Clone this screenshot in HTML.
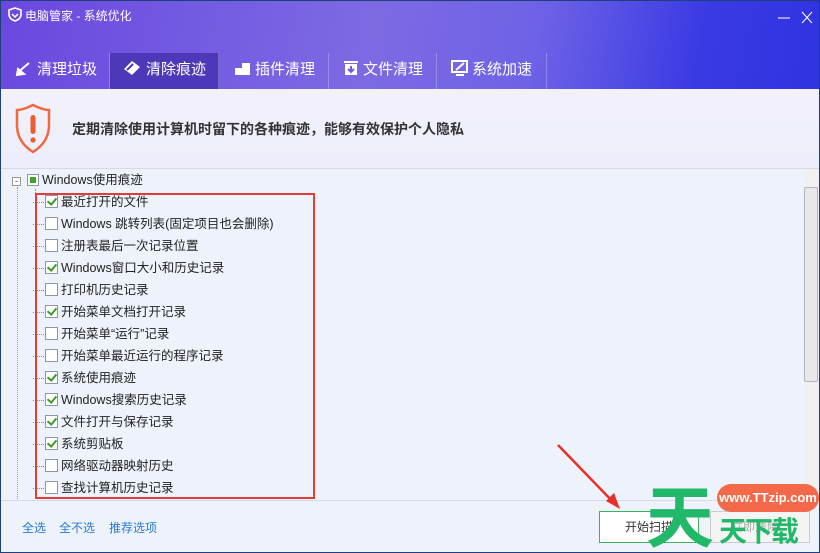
<!DOCTYPE html>
<html><head><meta charset="utf-8"><style>
*{margin:0;padding:0;box-sizing:border-box}
body{width:820px;height:553px;overflow:hidden;font-family:"Liberation Sans","Noto Sans CJK SC",sans-serif;background:#1d3f7a;position:relative}
.win{position:absolute;left:1px;top:1px;width:818px;height:551px;background:#eef3fb;overflow:hidden}
.hdr{position:absolute;left:0;top:0;width:818px;height:88px;background:linear-gradient(100deg,#6a48df 0%,#7d6ae3 45%,#6e62e6 65%,#3a3ae4 85%,#2f33e0 100%)}
.title{position:absolute;left:24px;top:6px;color:#fff;font-size:12px}
.tab{position:absolute;top:52px;height:36px;color:#fff;font-size:15px;line-height:34px;border-right:1px solid rgba(255,255,255,.25);white-space:nowrap}
.tab.act{background:#4d38b8}
.tab span{position:absolute;top:0}
.ban{position:absolute;left:0;top:88px;width:818px;height:80px;background:linear-gradient(180deg,#f3f1fb,#eceefb);border-bottom:1px solid #d5d9e6}
.ban span{position:absolute;left:71px;top:30px;font-size:14px;font-weight:bold;color:#333;white-space:nowrap}
.row{position:absolute;left:44px;height:22px;font-size:12.5px;color:#222;line-height:22px}
.cb{position:absolute;left:0;top:4px;width:13px;height:13px;border:1px solid #8b98a8;background:#fff}
.cb.c::after{content:"";position:absolute;left:3px;top:0px;width:4px;height:7px;border:solid #3a9a2a;border-width:0 2px 2px 0;transform:rotate(40deg)}
.row b{position:absolute;left:16px;font-weight:normal;white-space:nowrap}
.dot{position:absolute;left:-12px;top:11px;width:11px;border-top:1px dotted #888}
.links{position:absolute;top:518px;font-size:12px;color:#2a7ad6}
</style></head><body><div class="win">
<div class="hdr">
<svg style="position:absolute;left:7px;top:6px" width="14" height="15" viewBox="0 0 14 15"><path d="M7 1 L13 3 V7 C13 11 10 13 7 14 C4 13 1 11 1 7 V3 Z" fill="none" stroke="#fff" stroke-width="1.6"/><path d="M4 7 L7 10 L10 7" fill="none" stroke="#fff" stroke-width="1.5"/></svg>
<div class="title">电脑管家 - 系统优化</div>
<svg style="position:absolute;left:774px;top:10px" width="40" height="14"><path d="M3 7H15" stroke="#fff"/><path d="M27 1L37 12M37 1L27 12" stroke="#fff"/></svg>
<div class="tab" style="left:0;width:109px"><span style="left:36px">清理垃圾</span></div>
<div class="tab act" style="left:109px;width:109px"><span style="left:36px">清除痕迹</span></div>
<div class="tab" style="left:218px;width:110px"><span style="left:36px">插件清理</span></div>
<div class="tab" style="left:328px;width:108px"><span style="left:34px">文件清理</span></div>
<div class="tab" style="left:436px;width:110px"><span style="left:35px">系统加速</span></div>
<svg style="position:absolute;left:14px;top:60px" width="18" height="16"><path d="M2 12L14 2M3 8L9 13 2 14Z" stroke="#fff" stroke-width="2" fill="#fff"/></svg>
<svg style="position:absolute;left:121px;top:58px" width="20" height="18"><path d="M2 10L10 2 18 8 10 16Z" fill="#fff"/><path d="M5 11L11 5" stroke="#4d38b8" stroke-width="2"/></svg>
<svg style="position:absolute;left:233px;top:58px" width="18" height="18"><rect x="1" y="9" width="7" height="7" fill="#fff"/><rect x="8" y="4" width="8" height="12" fill="#fff"/></svg>
<svg style="position:absolute;left:342px;top:58px" width="16" height="18"><rect x="1" y="2" width="14" height="2" fill="#fff"/><rect x="2" y="5" width="12" height="11" fill="#fff"/><path d="M8 7V13M5 10L8 13 11 10" stroke="#6a5ee0" stroke-width="2" fill="none"/></svg>
<svg style="position:absolute;left:450px;top:58px" width="18" height="18"><rect x="1" y="2" width="15" height="11" fill="none" stroke="#fff" stroke-width="2"/><path d="M5 16H13" stroke="#fff" stroke-width="2"/><path d="M5 11L13 4" stroke="#fff" stroke-width="2"/></svg>
</div>
<div class="ban">
<svg style="position:absolute;left:14px;top:14px" width="36" height="52" viewBox="0 0 36 52"><path d="M18 2 C10 6 5 7 2 7 V22 C2 36 10 44 18 49 C26 44 34 36 34 22 V7 C31 7 26 6 18 2Z" fill="none" stroke="#ef6a3e" stroke-width="2.5"/><rect x="15.5" y="12" width="5" height="19" rx="2.5" fill="#ef5a2e"/><circle cx="18" cy="37" r="2.6" fill="#ef5a2e"/></svg>
<span>定期清除使用计算机时留下的各种痕迹，能够有效保护个人隐私</span>
</div>
<div style="position:absolute;left:11px;top:176px;width:9px;height:9px;border:1px solid #999;background:#fff;font-size:9px;line-height:6px;text-align:center;color:#333">-</div>
<div style="position:absolute;left:26px;top:173px;width:12px;height:12px;border:1px solid #8b98a8;background:#fff"><div style="margin:2px;width:6px;height:6px;background:#3fa52a"></div></div>
<div style="position:absolute;left:41px;top:170px;font-size:12.5px;color:#222;line-height:18px">Windows使用痕迹</div>
<div style="position:absolute;left:16px;top:186px;height:314px;border-left:1px dotted #999"></div>
<div style="position:absolute;left:34px;top:188px;height:12px;border-left:1px dotted #999"></div>
<div class="row" style="top:190px"><i class="dot"></i><i class="cb c"></i><b>最近打开的文件</b></div>
<div class="row" style="top:212px"><i class="dot"></i><i class="cb"></i><b>Windows 跳转列表(固定项目也会删除)</b></div>
<div class="row" style="top:234px"><i class="dot"></i><i class="cb"></i><b>注册表最后一次记录位置</b></div>
<div class="row" style="top:256px"><i class="dot"></i><i class="cb c"></i><b>Windows窗口大小和历史记录</b></div>
<div class="row" style="top:278px"><i class="dot"></i><i class="cb"></i><b>打印机历史记录</b></div>
<div class="row" style="top:300px"><i class="dot"></i><i class="cb c"></i><b>开始菜单文档打开记录</b></div>
<div class="row" style="top:322px"><i class="dot"></i><i class="cb"></i><b>开始菜单“运行”记录</b></div>
<div class="row" style="top:344px"><i class="dot"></i><i class="cb"></i><b>开始菜单最近运行的程序记录</b></div>
<div class="row" style="top:366px"><i class="dot"></i><i class="cb c"></i><b>系统使用痕迹</b></div>
<div class="row" style="top:388px"><i class="dot"></i><i class="cb c"></i><b>Windows搜索历史记录</b></div>
<div class="row" style="top:410px"><i class="dot"></i><i class="cb c"></i><b>文件打开与保存记录</b></div>
<div class="row" style="top:432px"><i class="dot"></i><i class="cb c"></i><b>系统剪贴板</b></div>
<div class="row" style="top:454px"><i class="dot"></i><i class="cb"></i><b>网络驱动器映射历史</b></div>
<div class="row" style="top:476px"><i class="dot"></i><i class="cb"></i><b>查找计算机历史记录</b></div>
<div style="position:absolute;left:34px;top:192px;width:280px;height:306px;border:2px solid #e23b3b"></div>
<div style="position:absolute;left:802px;top:168px;width:16px;height:332px;background:#f0f0f0"><div style="position:absolute;left:1px;top:18px;width:14px;height:195px;background:#e8e8e8;border:1px solid #b5b5b5;border-radius:2px"></div></div>
<div style="position:absolute;left:0;top:499px;width:818px;border-top:1px solid #d5dbe6"></div>
<div class="links" style="left:21px">全选</div>
<div class="links" style="left:58px">全不选</div>
<div class="links" style="left:108px">推荐选项</div>
<div style="position:absolute;left:598px;top:510px;width:100px;height:32px;border:1px solid #3bb35a;background:#fff;font-size:12px;line-height:30px;padding-left:25px;color:#333">开始扫描</div>
<div style="position:absolute;left:709px;top:510px;width:100px;height:32px;border:1px solid #ccc;background:#f4f4f4;font-size:12px;line-height:30px;padding-left:20px;color:#aaa">立即清除</div>
<svg style="position:absolute;left:555px;top:442px" width="70" height="70"><path d="M2 2L60 62" stroke="#e8302a" stroke-width="2.5"/><path d="M50 58L64 66 58 50Z" fill="#e8302a"/></svg>
<div style="position:absolute;left:645px;top:474px;font-size:68px;font-weight:bold;color:#22b86a;line-height:76px;font-family:'Noto Sans CJK SC',sans-serif">天</div>
<div style="position:absolute;left:716px;top:483px;width:102px;height:28px;border-radius:14px;background:#f4694a;color:#fff;font-size:13px;font-weight:bold;line-height:28px;text-align:center">www.TTzip.com</div>
<div style="position:absolute;left:718px;top:512px;font-size:28px;font-weight:bold;color:#22b86a;line-height:34px;font-family:'Noto Sans CJK SC',sans-serif;letter-spacing:-2px">天下载</div>
</div></body></html>
